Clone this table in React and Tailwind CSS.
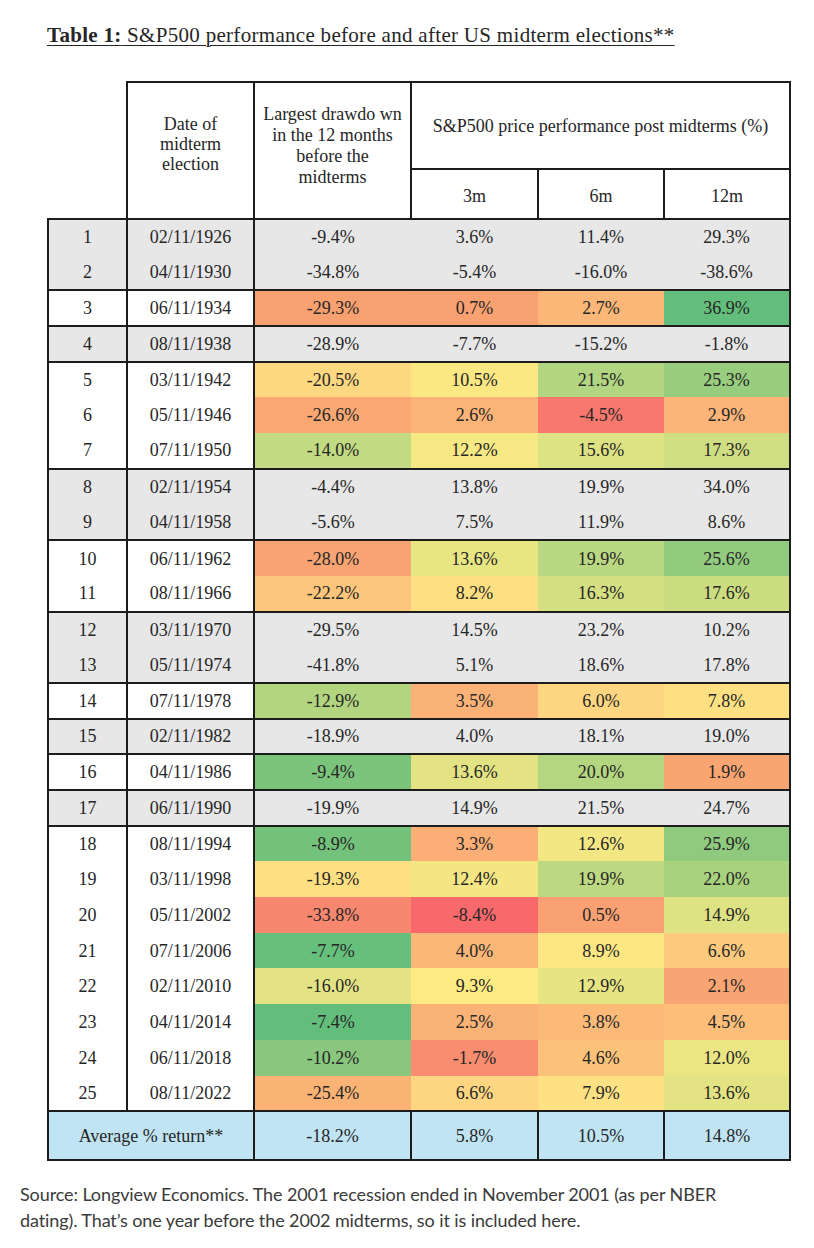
import React from "react";

const rows = [
  ["1", "02/11/1926", "-9.4%", "3.6%", "11.4%", "29.3%"],
  ["2", "04/11/1930", "-34.8%", "-5.4%", "-16.0%", "-38.6%"],
  ["3", "06/11/1934", "-29.3%", "0.7%", "2.7%", "36.9%"],
  ["4", "08/11/1938", "-28.9%", "-7.7%", "-15.2%", "-1.8%"],
  ["5", "03/11/1942", "-20.5%", "10.5%", "21.5%", "25.3%"],
  ["6", "05/11/1946", "-26.6%", "2.6%", "-4.5%", "2.9%"],
  ["7", "07/11/1950", "-14.0%", "12.2%", "15.6%", "17.3%"],
  ["8", "02/11/1954", "-4.4%", "13.8%", "19.9%", "34.0%"],
  ["9", "04/11/1958", "-5.6%", "7.5%", "11.9%", "8.6%"],
  ["10", "06/11/1962", "-28.0%", "13.6%", "19.9%", "25.6%"],
  ["11", "08/11/1966", "-22.2%", "8.2%", "16.3%", "17.6%"],
  ["12", "03/11/1970", "-29.5%", "14.5%", "23.2%", "10.2%"],
  ["13", "05/11/1974", "-41.8%", "5.1%", "18.6%", "17.8%"],
  ["14", "07/11/1978", "-12.9%", "3.5%", "6.0%", "7.8%"],
  ["15", "02/11/1982", "-18.9%", "4.0%", "18.1%", "19.0%"],
  ["16", "04/11/1986", "-9.4%", "13.6%", "20.0%", "1.9%"],
  ["17", "06/11/1990", "-19.9%", "14.9%", "21.5%", "24.7%"],
  ["18", "08/11/1994", "-8.9%", "3.3%", "12.6%", "25.9%"],
  ["19", "03/11/1998", "-19.3%", "12.4%", "19.9%", "22.0%"],
  ["20", "05/11/2002", "-33.8%", "-8.4%", "0.5%", "14.9%"],
  ["21", "07/11/2006", "-7.7%", "4.0%", "8.9%", "6.6%"],
  ["22", "02/11/2010", "-16.0%", "9.3%", "12.9%", "2.1%"],
  ["23", "04/11/2014", "-7.4%", "2.5%", "3.8%", "4.5%"],
  ["24", "06/11/2018", "-10.2%", "-1.7%", "4.6%", "12.0%"],
  ["25", "08/11/2022", "-25.4%", "6.6%", "7.9%", "13.6%"],
];

const G = "bg-[#e7e7e7]";
// per-row background classes for the 4 value columns; null => gray row
const colors = [
  null,
  null,
  ["bg-[#f8a070]", "bg-[#f9a171]", "bg-[#fbb777]", "bg-[#63be7b]"],
  null,
  ["bg-[#fed880]", "bg-[#fce883]", "bg-[#b1d580]", "bg-[#98cd7e]"],
  ["bg-[#f9a873]", "bg-[#fbb377]", "bg-[#f8786d]", "bg-[#fcb478]"],
  ["bg-[#c2da81]", "bg-[#f6e883]", "bg-[#dde383]", "bg-[#cfde82]"],
  null,
  null,
  ["bg-[#f9a472]", "bg-[#e8e583]", "bg-[#bad781]", "bg-[#92cb7e]"],
  ["bg-[#fdc67c]", "bg-[#fedf81]", "bg-[#d4df82]", "bg-[#cbdc81]"],
  null,
  null,
  ["bg-[#b4d580]", "bg-[#fbb276]", "bg-[#fed580]", "bg-[#fee082]"],
  null,
  ["bg-[#7cc47c]", "bg-[#e3e383]", "bg-[#b5d680]", "bg-[#f9a572]"],
  null,
  ["bg-[#73c27b]", "bg-[#fbae75]", "bg-[#f3e783]", "bg-[#8fca7e]"],
  ["bg-[#fedf81]", "bg-[#f4e783]", "bg-[#bcd880]", "bg-[#a9d27f]"],
  ["bg-[#f8876f]", "bg-[#f8696b]", "bg-[#f9a172]", "bg-[#dde282]"],
  ["bg-[#66bf7b]", "bg-[#fbb777]", "bg-[#fee783]", "bg-[#fdc97d]"],
  ["bg-[#e4e383]", "bg-[#feea83]", "bg-[#e6e483]", "bg-[#f9a573]"],
  ["bg-[#63be7b]", "bg-[#fbb276]", "bg-[#fbba78]", "bg-[#fcbe79]"],
  ["bg-[#88c77d]", "bg-[#f88e6f]", "bg-[#fcc27a]", "bg-[#ece583]"],
  ["bg-[#fbb375]", "bg-[#fed580]", "bg-[#fee182]", "bg-[#e4e383]"],
];

// indices (0-based) of rows that start a new bordered group
const groupStarts = new Set([0, 2, 3, 4, 7, 9, 11, 13, 14, 15, 16, 17]);

const B = "border-[#1c1c1c]";

export default function App() {
  return (
    <div className="min-h-[1248px] w-[814px] bg-white text-[#262626]">
      <div className="pl-[47px] pt-[22px]">
        <h1
          className="text-[21px] leading-[26px] underline underline-offset-[3px] decoration-[1px] tracking-[0.3px]"
          style={{ fontFamily: '"Liberation Serif", serif' }}
        >
          <span className="font-bold">Table 1:</span> S&amp;P500 performance before and after US midterm elections**
        </h1>
      </div>

      <div className="pl-[47px] pt-[33px]" style={{ fontFamily: '"Liberation Serif", serif' }}>
        <table className="table-fixed border-collapse w-[742px] text-center">
          <colgroup>
            <col className="w-[79px]" />
            <col className="w-[127px]" />
            <col className="w-[157px]" />
            <col className="w-[127px]" />
            <col className="w-[126px]" />
            <col className="w-[126px]" />
          </colgroup>
          <thead className="text-[18px] leading-[20px] font-normal">
            <tr className="h-[87px]">
              <th className="font-normal"></th>
              <th rowSpan={2} className={`font-normal border-2 ${B} align-middle px-1 pb-[14px]`}>
                Date of
                <br />
                midterm
                <br />
                election
              </th>
              <th rowSpan={2} className={`font-normal border-2 ${B} align-middle px-1 pb-[10px] leading-[21px]`}>
                Largest drawdo wn
                <br />
                in the 12 months
                <br />
                before the
                <br />
                midterms
              </th>
              <th colSpan={3} className={`font-normal border-2 ${B} align-middle`}>
                S&amp;P500 price performance post midterms (%)
              </th>
            </tr>
            <tr className="h-[50px]">
              <th className="font-normal"></th>
              <th className={`font-normal border-2 ${B} pt-[4px]`}>3m</th>
              <th className={`font-normal border-2 ${B} pt-[4px]`}>6m</th>
              <th className={`font-normal border-2 ${B} pt-[4px]`}>12m</th>
            </tr>
          </thead>
          <tbody className="text-[18px] leading-[20px]">
            {rows.map((r, i) => {
              const c = colors[i];
              const top = groupStarts.has(i) ? `border-t-2 ${B}` : "";
              const last = i === rows.length - 1 ? `border-b-2 ${B}` : "";
              const leftBg = c ? "bg-white" : G;
              return (
                <tr key={i} className="h-[35.7px]">
                  <td className={`${leftBg} border-l-2 ${B} ${top} ${last}`}>{r[0]}</td>
                  <td className={`${leftBg} border-l-2 ${B} ${top} ${last}`}>{r[1]}</td>
                  <td className={`${c ? c[0] : G} border-l-2 ${B} ${top} ${last}`}>{r[2]}</td>
                  <td className={`${c ? c[1] : G} ${top} ${last}`}>{r[3]}</td>
                  <td className={`${c ? c[2] : G} ${top} ${last}`}>{r[4]}</td>
                  <td className={`${c ? c[3] : G} border-r-2 ${B} ${top} ${last}`}>{r[5]}</td>
                </tr>
              );
            })}
            <tr className="h-[49px] bg-[#c0e4f3]">
              <td colSpan={2} className={`border-2 ${B}`}>Average % return**</td>
              <td className={`border-2 ${B}`}>-18.2%</td>
              <td className={`border-2 ${B}`}>5.8%</td>
              <td className={`border-2 ${B}`}>10.5%</td>
              <td className={`border-2 ${B}`}>14.8%</td>
            </tr>
          </tbody>
        </table>
      </div>

      <p
        className="pl-[20px] pt-[20px] pr-[60px] text-[18px] leading-[26px] text-[#3a3a3a] tracking-[-0.1px]"
        style={{ fontFamily: "Lato, sans-serif" }}
      >
        Source: Longview Economics. The 2001 recession ended in November 2001 (as per NBER dating). That’s one year before the 2002 midterms, so it is included here.
      </p>
    </div>
  );
}
